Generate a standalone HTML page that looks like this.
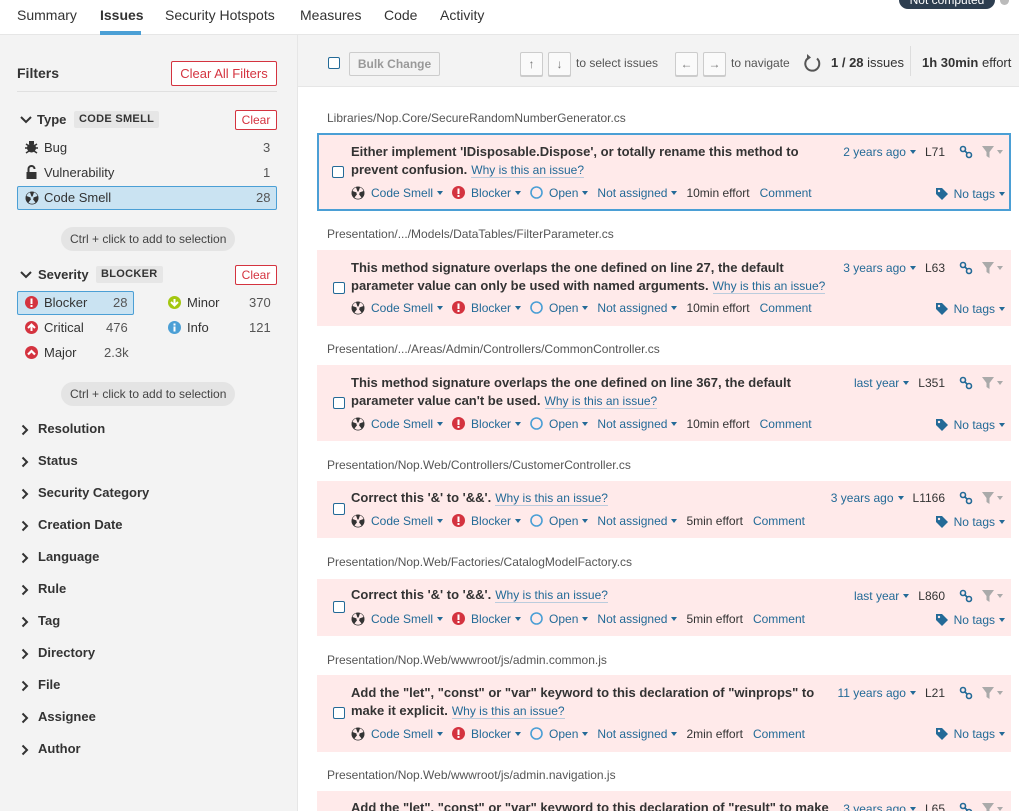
<!DOCTYPE html>
<html><head><meta charset="utf-8"><style>
*{box-sizing:border-box;margin:0;padding:0}
html,body{overflow:hidden}
body{width:1019px;height:811px;overflow:hidden;font-family:"Liberation Sans",Arial,sans-serif;font-size:13px;color:#333;background:#fff;position:relative}
.a{position:absolute;white-space:nowrap}
.nav{position:absolute;left:0;top:0;width:1019px;height:35px;border-bottom:1px solid #e6e6e6;background:#fff}
.nav span{position:absolute;top:7px;font-size:14px;color:#333}
.side{position:absolute;left:0;top:35px;width:298px;height:776px;background:#f3f3f3;border-right:1px solid #e6e6e6}
.main{position:absolute;left:298px;top:35px;width:721px;height:776px;background:#fff}
.tb{position:absolute;left:298px;top:35px;width:721px;height:52px;background:#f3f3f3;border-bottom:1px solid #e6e6e6}
.cb{position:absolute;width:12px;height:12px;border:1px solid #236a97;border-radius:2px;background:#fff}
.btn{position:absolute;border:1px solid #ccc;border-radius:2px;background:#f3f3f3;color:#999;text-align:center}
.kbd{position:absolute;width:23px;height:24px;border:1px solid #ccc;border-radius:2px;background:#fafafa;box-shadow:0 1px 0 #ccc;text-align:center;line-height:22px;color:#777;font-size:12px}
.red{position:absolute;border:1px solid #d4333f;color:#d4333f;border-radius:2px;background:#fff;text-align:center}
.tag{position:absolute;background:#e6e6e6;border-radius:2px;font-size:11px;font-weight:bold;padding:0 5px;height:17px;line-height:17px;letter-spacing:.3px}
.fh{position:absolute;font-weight:bold;font-size:13px;color:#333}
.sel{position:absolute;background:#cae3f2;border:1px solid #4b9fd5;border-radius:2px}
.hint{position:absolute;background:#e4e4e4;border-radius:12px;height:24px;line-height:24px;padding:0 9px;color:#444;font-size:12px}
.path{position:absolute;left:327px;font-size:12px;color:#555}
.card{position:absolute;left:317px;width:694px;background:#ffeaea;overflow:hidden}
.card.s{border:2px solid #4b9fd5}
.ti{position:absolute;left:34px;font-weight:bold;color:#333;font-size:13px;line-height:18px;white-space:nowrap}
.why{font-weight:normal;color:#236a97;font-size:12px;border-bottom:1px solid #bcd;margin-left:4px}
.meta{position:absolute;left:34px;font-size:12px;color:#236a97;white-space:nowrap;height:18px;line-height:18px}
.car{display:inline-block;width:0;height:0;border-left:3.5px solid transparent;border-right:3.5px solid transparent;border-top:4px solid #236a97;vertical-align:2px;margin-left:4px;margin-right:9px}
.rt{position:absolute;right:6px;font-size:12px;color:#236a97;white-space:nowrap;line-height:18px}
.g{color:#333}
</style></head><body>
<div class="nav">
<span style="left:17px">Summary</span>
<span style="left:100px;font-weight:bold">Issues</span>
<div class="a" style="left:100px;top:31px;width:41px;height:4px;background:#4b9fd5"></div>
<span style="left:165px">Security Hotspots</span>
<span style="left:300px">Measures</span>
<span style="left:384px">Code</span>
<span style="left:440px">Activity</span>
<div class="a" style="left:899px;top:-9px;width:96px;height:18px;border-radius:9px;background:#2d3e50;color:#fff;font-size:12px;text-align:center;line-height:18px">Not computed</div>
<div class="a" style="left:1000px;top:-4px;width:9px;height:9px;border-radius:50%;background:#bbb"></div>
</div>
<div class="side">
<div class="a" style="left:17px;top:30px;font-weight:bold;font-size:14px">Filters</div>
<div class="red" style="left:171px;top:26px;width:106px;height:25px;line-height:23px;font-size:13px">Clear All Filters</div>
<div class="a" style="left:17px;top:56px;width:260px;height:1px;background:#e0e0e0"></div>
<svg class="a" style="left:20px;top:81px" width="12" height="8"><path d="M1 1l5 5 5-5" stroke="#333" stroke-width="2" fill="none"/></svg>
<div class="fh" style="left:37px;top:77px">Type</div>
<div class="tag" style="left:74px;top:76px">CODE SMELL</div>
<div class="red" style="left:235px;top:75px;width:42px;height:20px;line-height:18px;font-size:12px">Clear</div>
<svg class="a" style="left:25px;top:105px" width="13" height="14"><circle cx="6.5" cy="8" r="4.5" fill="#333"/><path d="M1 4l3 2M12 4l-3 2M0 8h3M10 8h3M1 13l3-2M12 13l-3-2" stroke="#333" stroke-width="1.5"/><rect x="4" y="1" width="5" height="3" fill="#333"/></svg>
<div class="a" style="left:44px;top:105px">Bug</div><div class="a" style="left:263px;top:105px;color:#555">3</div>
<svg class="a" style="left:26px;top:130px" width="11" height="14"><path d="M2.5 7V4a3 3 0 016 0" stroke="#333" stroke-width="2" fill="none"/><rect x="0.5" y="7" width="10" height="7" fill="#333"/></svg>
<div class="a" style="left:44px;top:130px">Vulnerability</div><div class="a" style="left:263px;top:130px;color:#555">1</div>
<div class="sel" style="left:17px;top:151px;width:260px;height:24px"></div>
<svg class="a" style="left:25px;top:156px" width="14" height="14"><circle cx="7" cy="7" r="6.5" fill="#333"/><circle cx="7" cy="7" r="1.5" fill="#cae3f2"/><path d="M7 7L3.5 2.5A5.5 5.5 0 0 1 10.5 2.5Z M7 7L1.5 9A5.5 5.5 0 0 0 5 12.6Z M7 7L9 12.6A5.5 5.5 0 0 0 12.5 9Z" fill="#cae3f2" transform="rotate(180 7 7)"/></svg>
<div class="a" style="left:44px;top:155px">Code Smell</div><div class="a" style="left:256px;top:155px;color:#555">28</div>
<div class="hint" style="left:61px;top:192px">Ctrl + click to add to selection</div>
<svg class="a" style="left:20px;top:236px" width="12" height="8"><path d="M1 1l5 5 5-5" stroke="#333" stroke-width="2" fill="none"/></svg>
<div class="fh" style="left:38px;top:232px">Severity</div>
<div class="tag" style="left:96px;top:231px">BLOCKER</div>
<div class="red" style="left:235px;top:230px;width:42px;height:20px;line-height:18px;font-size:12px">Clear</div>
<div class="sel" style="left:17px;top:256px;width:117px;height:24px"></div>
<svg class="a" style="left:25px;top:261px" width="13" height="13"><circle cx="6.5" cy="6.5" r="6.5" fill="#d4333f"/><rect x="5.5" y="2.5" width="2" height="5.5" fill="#fff"/><rect x="5.5" y="9" width="2" height="2" fill="#fff"/></svg>
<div class="a" style="left:44px;top:260px">Blocker</div><div class="a" style="left:113px;top:260px;color:#555">28</div>
<svg class="a" style="left:25px;top:286px" width="13" height="13"><circle cx="6.5" cy="6.5" r="6.5" fill="#d4333f"/><path d="M3 7l3.5-3.5L10 7M6.5 4v6" stroke="#fff" stroke-width="2" fill="none"/></svg>
<div class="a" style="left:44px;top:285px">Critical</div><div class="a" style="left:106px;top:285px;color:#555">476</div>
<svg class="a" style="left:25px;top:311px" width="13" height="13"><circle cx="6.5" cy="6.5" r="6.5" fill="#d4333f"/><path d="M3 8.5l3.5-3.5L10 8.5" stroke="#fff" stroke-width="2.2" fill="none"/></svg>
<div class="a" style="left:44px;top:310px">Major</div><div class="a" style="left:104px;top:310px;color:#555">2.3k</div>
<svg class="a" style="left:168px;top:261px" width="13" height="13"><circle cx="6.5" cy="6.5" r="6.5" fill="#a4c710"/><path d="M3 6l3.5 3.5L10 6M6.5 3v6" stroke="#fff" stroke-width="2" fill="none"/></svg>
<div class="a" style="left:187px;top:260px">Minor</div><div class="a" style="left:249px;top:260px;color:#555">370</div>
<svg class="a" style="left:168px;top:286px" width="13" height="13"><circle cx="6.5" cy="6.5" r="6.5" fill="#4b9fd5"/><rect x="5.5" y="5.5" width="2" height="5" fill="#fff"/><rect x="5.5" y="2.5" width="2" height="2" fill="#fff"/></svg>
<div class="a" style="left:187px;top:285px">Info</div><div class="a" style="left:249px;top:285px;color:#555">121</div>
<div class="hint" style="left:61px;top:347px">Ctrl + click to add to selection</div>
<div id="facets"></div>
</div>
<div class="main"></div>
<div class="tb">
<div class="cb" style="left:30px;top:22px"></div>
<div class="btn" style="left:51px;top:17px;width:91px;height:24px;line-height:22px;font-weight:bold;font-size:12px">Bulk Change</div>
<div class="kbd" style="left:222px;top:17px">&#8593;</div>
<div class="kbd" style="left:250px;top:17px">&#8595;</div>
<div class="a" style="left:278px;top:21px;font-size:12px;color:#555">to select issues</div>
<div class="kbd" style="left:377px;top:17px">&#8592;</div>
<div class="kbd" style="left:405px;top:17px">&#8594;</div>
<div class="a" style="left:433px;top:21px;font-size:12px;color:#555">to navigate</div>
<svg class="a" style="left:505px;top:17px" width="20" height="22"><path d="M14 6.5A7 7 0 1 1 6 5.5" stroke="#555" stroke-width="2" fill="none"/><path d="M4 2l4 3.5-4 3z" fill="#555"/></svg>
<div class="a" style="left:533px;top:20px;font-size:13px"><b>1 / 28</b> issues</div>
<div class="a" style="left:612px;top:11px;width:1px;height:30px;background:#ddd"></div>
<div class="a" style="left:624px;top:20px;font-size:13px;font-weight:bold">1h 30min <span style="font-weight:normal">effort</span></div>
</div>

<div class="path" style="top:111px">Libraries/Nop.Core/SecureRandomNumberGenerator.cs</div>
<div class="card s" style="top:133px;height:78px">
<div class="cb" style="left:13px;top:31px"></div>
<div class="ti" style="top:8px;left:32px">Either implement 'IDisposable.Dispose', or totally rename this method to<br>prevent confusion.<span class="why">Why is this an issue?</span></div>
<div class="rt" style="top:8px;right:4px">2 years ago<span class="car"></span><span class="g">L71</span></div>
<div class="meta m1" style="top:49px;left:32px"></div><div class="rt tg" style="top:50px;right:4px"></div>
</div>

<div class="path" style="top:227px">Presentation/.../Models/DataTables/FilterParameter.cs</div>
<div class="card" style="top:250px;height:76px">
<div class="cb" style="left:16px;top:32px"></div>
<div class="ti" style="top:9px">This method signature overlaps the one defined on line 27, the default<br>parameter value can only be used with named arguments.<span class="why">Why is this an issue?</span></div>
<div class="rt" style="top:9px">3 years ago<span class="car"></span><span class="g">L63</span></div>
<div class="meta m1" style="top:49px"></div><div class="rt tg" style="top:50px"></div>
</div>

<div class="path" style="top:342px">Presentation/.../Areas/Admin/Controllers/CommonController.cs</div>
<div class="card" style="top:365px;height:76px">
<div class="cb" style="left:16px;top:32px"></div>
<div class="ti" style="top:9px">This method signature overlaps the one defined on line 367, the default<br>parameter value can't be used.<span class="why">Why is this an issue?</span></div>
<div class="rt" style="top:9px">last year<span class="car"></span><span class="g">L351</span></div>
<div class="meta m1" style="top:50px"></div><div class="rt tg" style="top:51px"></div>
</div>

<div class="path" style="top:458px">Presentation/Nop.Web/Controllers/CustomerController.cs</div>
<div class="card" style="top:481px;height:57px">
<div class="cb" style="left:16px;top:22px"></div>
<div class="ti" style="top:8px">Correct this '&amp;' to '&amp;&amp;'.<span class="why">Why is this an issue?</span></div>
<div class="rt" style="top:8px">3 years ago<span class="car"></span><span class="g">L1166</span></div>
<div class="meta m2" style="top:31px"></div><div class="rt tg" style="top:32px"></div>
</div>

<div class="path" style="top:555px">Presentation/Nop.Web/Factories/CatalogModelFactory.cs</div>
<div class="card" style="top:579px;height:57px">
<div class="cb" style="left:16px;top:22px"></div>
<div class="ti" style="top:7px">Correct this '&amp;' to '&amp;&amp;'.<span class="why">Why is this an issue?</span></div>
<div class="rt" style="top:8px">last year<span class="car"></span><span class="g">L860</span></div>
<div class="meta m2" style="top:31px"></div><div class="rt tg" style="top:32px"></div>
</div>

<div class="path" style="top:653px">Presentation/Nop.Web/wwwroot/js/admin.common.js</div>
<div class="card" style="top:675px;height:77px">
<div class="cb" style="left:16px;top:32px"></div>
<div class="ti" style="top:9px">Add the "let", "const" or "var" keyword to this declaration of "winprops" to<br>make it explicit.<span class="why">Why is this an issue?</span></div>
<div class="rt" style="top:9px">11 years ago<span class="car"></span><span class="g">L21</span></div>
<div class="meta m3" style="top:50px"></div><div class="rt tg" style="top:50px"></div>
</div>

<div class="path" style="top:768px">Presentation/Nop.Web/wwwroot/js/admin.navigation.js</div>
<div class="card" style="top:791px;height:20px">
<div class="ti" style="top:8px">Add the "let", "const" or "var" keyword to this declaration of "result" to make</div>
<div class="rt" style="top:9px">3 years ago<span class="car"></span><span class="g">L65</span></div>
</div>

<script>
var f=["Resolution","Status","Security Category","Creation Date","Language","Rule","Tag","Directory","File","Assignee","Author"],h="";
f.forEach(function(n,i){var t=386+i*32;h+='<svg class="a" style="left:21px;top:'+(t+3)+'px" width="8" height="12"><path d="M1.5 1.5l4.5 4.5-4.5 4.5" stroke="#333" stroke-width="2" fill="none"/></svg><div class="fh" style="left:38px;top:'+t+'px">'+n+'</div>'});
document.getElementById('facets').innerHTML=h;
function meta(e){return '<svg width="14" height="14" style="vertical-align:-3px;margin-right:6px"><circle cx="7" cy="7" r="6.5" fill="#333"/><circle cx="7" cy="7" r="1.5" fill="#ffeaea"/><path d="M7 7L3.5 2.5A5.5 5.5 0 0 1 10.5 2.5Z M7 7L1.5 9A5.5 5.5 0 0 0 5 12.6Z M7 7L9 12.6A5.5 5.5 0 0 0 12.5 9Z" fill="#ffeaea" transform="rotate(180 7 7)"/></svg>Code Smell<span class="car"></span><svg width="13" height="13" style="vertical-align:-2px;margin-right:6px"><circle cx="6.5" cy="6.5" r="6.5" fill="#d4333f"/><rect x="5.5" y="2.5" width="2" height="5.5" fill="#fff"/><rect x="5.5" y="9" width="2" height="2" fill="#fff"/></svg>Blocker<span class="car"></span><svg width="13" height="13" style="vertical-align:-2px;margin-right:6px"><circle cx="6.5" cy="6.5" r="5.5" stroke="#4b9fd5" stroke-width="1.6" fill="none"/></svg>Open<span class="car"></span>Not assigned<span class="car"></span><span class="g">'+e+'</span>&nbsp;&nbsp;&nbsp;Comment'}
var tg='<svg width="12" height="12" style="vertical-align:-2px;margin-right:6px"><path d="M0 0h6l6 6-6 6-6-6z" fill="#236a97"/><circle cx="3" cy="3" r="1.2" fill="#ffeaea"/></svg>No tags<span class="car" style="margin-right:0"></span>';
var icons='<svg width="14" height="14" style="vertical-align:-3px;margin-left:14px"><circle cx="4" cy="4" r="2.5" stroke="#236a97" stroke-width="1.6" fill="none"/><circle cx="10" cy="10" r="2.5" stroke="#236a97" stroke-width="1.6" fill="none"/><path d="M5.5 5.5l3 3" stroke="#236a97" stroke-width="1.6"/></svg><svg width="24" height="14" style="vertical-align:-3px;margin-left:8px"><path d="M1 1h12L8.5 7v6L5.5 11V7z" fill="#aaa"/><path d="M16 5h6l-3 4z" fill="#aaa"/></svg>';
document.querySelectorAll('.m1').forEach(function(e){e.innerHTML=meta('10min effort')});
document.querySelectorAll('.m2').forEach(function(e){e.innerHTML=meta('5min effort')});
document.querySelectorAll('.m3').forEach(function(e){e.innerHTML=meta('2min effort')});
document.querySelectorAll('.tg').forEach(function(e){e.innerHTML=tg});
document.querySelectorAll('.card .rt:not(.tg)').forEach(function(e){e.innerHTML+=icons});
</script>
</body></html>
